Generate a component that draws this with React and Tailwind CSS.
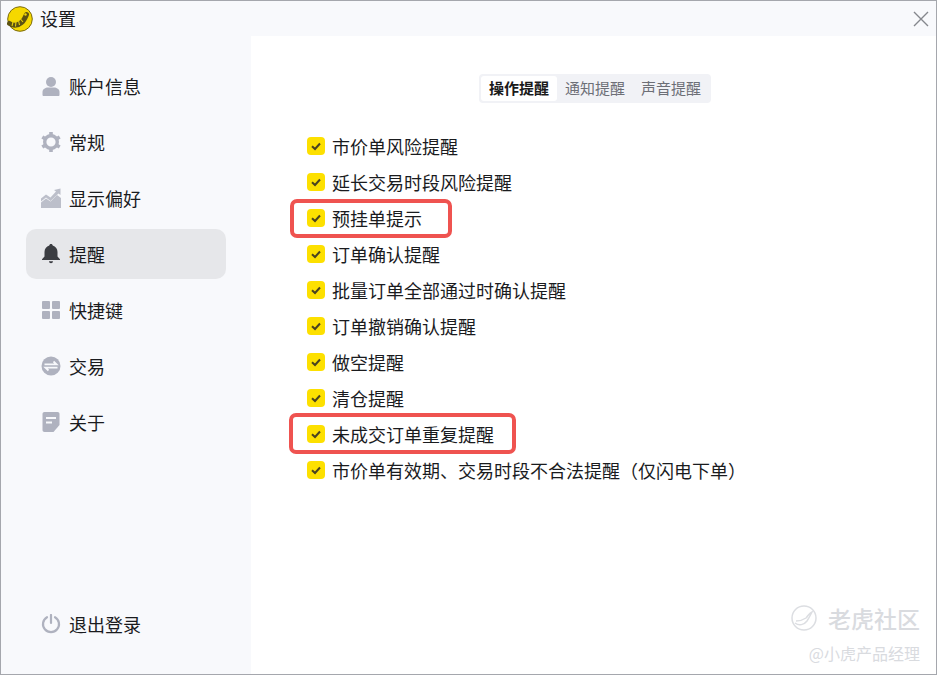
const menu = [
  { label: "账户信息", icon: UserIcon },
  { label: "常规", icon: GearIcon },
  { label: "显示偏好", icon: ChartIcon },
  { label: "提醒", icon: BellIcon, active: true },
  { label: "快捷键", icon: GridIcon },
  { label: "交易", icon: SwapIcon },
  { label: "关于", icon: NoteIcon },
];

const rows = [
  { label: "市价单风险提醒" },
  { label: "延长交易时段风险提醒" },
  { label: "预挂单提示", mark: "left-[-17px] top-[-1px] w-[162px] h-[39px]" },
  { label: "订单确认提醒" },
  { label: "批量订单全部通过时确认提醒" },
  { label: "订单撤销确认提醒" },
  { label: "做空提醒" },
  { label: "清仓提醒" },
  { label: "未成交订单重复提醒", mark: "left-[-18px] top-[-3px] w-[227px] h-[41px]" },
  { label: "市价单有效期、交易时段不合法提醒（仅闪电下单）" },
];

function UserIcon() {
  return (
    <svg viewBox="0 0 20 20" className="w-5 h-5" fill="#afb2bf">
      <circle cx="10" cy="6" r="5" />
      <path d="M1.500 19v-3c0-3 3-4.500 5.500-4.500h6c2.500 0 5.500 1.500 5.500 4.500v3c0 .5-.5 1-1 1h-15c-.5 0-1-.5-1-1z" />
    </svg>
  );
}

function GearIcon() {
  return (
    <svg viewBox="0 0 20 20" className="w-5 h-5">
      <circle cx="10" cy="10" r="6.300" fill="none" stroke="#afb2bf" strokeWidth="3.400" />
      <g stroke="#afb2bf" strokeWidth="3.600">
        <path d="M10 0v3.500M10 16.500V20M1.300 5l3 1.800M15.700 13.200l3 1.800M1.300 15l3-1.800M15.700 6.800l3-1.800" />
      </g>
    </svg>
  );
}

function ChartIcon() {
  return (
    <svg viewBox="0 0 20 20" className="w-5 h-5" fill="#bcbfca">
      <path d="M0 20v-5.500l5-4 4.500 3L16 7l4 3v10z" />
      <path d="M0 10.500l5-4 4.500 3L15 3.500l-2-1.500 6.500-1.500V7l-2-1.500-8 7.500L5 9.500l-5 4z" />
    </svg>
  );
}

function BellIcon() {
  return (
    <svg viewBox="0 0 20 20" className="w-5 h-5" fill="#3b3d42">
      <path d="M10 0c1 0 1.700.7 1.700 1.600C14.700 2.400 16.500 5 16.500 8v4.500l2.500 2.700V16H1v-.8l2.500-2.700V8c0-3 1.800-5.600 4.800-6.400C8.300.7 9 0 10 0z" />
      <path d="M8 17.300h4c0 1.200-.9 2-2 2s-2-.8-2-2z" />
    </svg>
  );
}

function GridIcon() {
  return (
    <svg viewBox="0 0 20 20" className="w-5 h-5" fill="#afb2bf">
      <rect x="1" y="1" width="8" height="8" rx="1" />
      <rect x="11" y="1" width="8" height="8" rx="1" />
      <rect x="1" y="11" width="8" height="8" rx="1" />
      <rect x="11" y="11" width="8" height="8" rx="1" />
    </svg>
  );
}

function SwapIcon() {
  return (
    <svg viewBox="0 0 20 20" className="w-5 h-5">
      <circle cx="10" cy="10" r="9.500" fill="#afb2bf" />
      <path d="M3.500 8.300h12L12.500 5.500M16.500 11.700h-12l3 2.800" fill="none" stroke="#f8f9fc" strokeWidth="1.800" />
    </svg>
  );
}

function NoteIcon() {
  return (
    <svg viewBox="0 0 20 20" className="w-5 h-5">
      <path d="M3.500 0h13c1.200 0 2 .8 2 2v11l-6 7h-9c-1.200 0-2-.8-2-2V2c0-1.200.8-2 2-2z" fill="#afb2bf" />
      <path d="M5 6h10M5 10.500h6" stroke="#f8f9fc" strokeWidth="2" />
    </svg>
  );
}

function PowerIcon() {
  return (
    <svg viewBox="0 0 20 20" className="w-5 h-5" fill="none" stroke="#afb2bf" strokeWidth="2.200" strokeLinecap="round">
      <path d="M6 3.200a8 8 0 1 0 8 0" />
      <path d="M10 1v8" />
    </svg>
  );
}

function Logo() {
  return (
    <svg viewBox="0 0 26 26" className="w-[26px] h-[26px]">
      <circle cx="13" cy="13" r="12.300" fill="#f5d800" stroke="#7a6a10" strokeWidth="1" />
      <path d="M2.500 17.500c4 2.500 8.500 2 12-1 2.500-2 3.500-4.500 5-8" fill="none" stroke="#5c5212" strokeWidth="5" strokeLinecap="round" />
      <path d="M5 20l1-4M8.500 20.500l.5-5M12.500 19l-1-4.500M16 16l-2.500-3" stroke="#e8cf10" strokeWidth="1.100" />
      <circle cx="18.500" cy="8.500" r="1.200" fill="#f5d800" />
    </svg>
  );
}

function Check() {
  return (
    <span className="flex items-center justify-center w-[18px] h-[18px] rounded-[4px] bg-[#fde000] shrink-0">
      <svg viewBox="0 0 18 18" className="w-[18px] h-[18px]" fill="none" stroke="#4a4320" strokeWidth="2">
        <path d="M5 9.200l3 2.800 5-5.500" />
      </svg>
    </span>
  );
}

function TigerMark() {
  return (
    <svg viewBox="0 0 28 28" className="w-7 h-7" fill="none" stroke="#dcdee2" strokeWidth="1.500">
      <circle cx="14" cy="14" r="12" />
      <path d="M5 19c4 3 9 2 12-2 2-3 3-5 5-9-3 1-4 4-6 6-3 2-6 3-10 3" />
    </svg>
  );
}

export default function App() {
  return (
    <div
      className="relative flex flex-col w-[937px] h-[675px] overflow-hidden bg-[#f8f9fc] border border-[#a5a7ad] text-[#1a1b1e]"
      style={{ fontFamily: '"Noto Sans CJK SC", "Noto Sans", sans-serif' }}
    >
      <header className="flex items-center h-[35px] shrink-0 pl-[6px] pr-[7px]">
        <Logo />
        <span className="ml-[7px] text-[18px] leading-none -mt-[2px]">设置</span>
        <svg viewBox="0 0 16 16" className="w-4 h-4 ml-auto" fill="none" stroke="#85878d" strokeWidth="1.400">
          <path d="M1 1l14 14M15 1L1 15" />
        </svg>
      </header>

      <div className="flex flex-1 min-h-0">
        <aside className="flex flex-col w-[250px] shrink-0 pl-[25px] pr-[25px] pt-[25px] pb-[25px]">
          <nav className="flex flex-col gap-[6px]">
            {menu.map(({ label, icon: Icon, active }) => (
              <div
                key={label}
                className={`flex items-center gap-[8px] h-[50px] pl-[15px] rounded-[10px] text-[18px] ${active ? "bg-[#e6e7ea]" : ""}`}
              >
                <Icon />
                <span>{label}</span>
              </div>
            ))}
          </nav>
          <div className="mt-auto flex items-center gap-[8px] h-[50px] pl-[15px] text-[18px]">
            <PowerIcon />
            <span>退出登录</span>
          </div>
        </aside>

        <main className="relative flex-1 bg-white pt-[38px]">
          <div className="flex justify-center pl-[3px]">
            <div className="flex items-center h-[29px] p-[2px] rounded-[4px] bg-[#f1f2f6] text-[15px]">
              <span className="flex items-center h-full px-[8px] bg-white rounded-[3px] font-bold text-[#1a1a1a]">操作提醒</span>
              <span className="px-[8px] text-[#6d6f76]">通知提醒</span>
              <span className="px-[8px] text-[#6d6f76]">声音提醒</span>
            </div>
          </div>

          <ul className="flex flex-col mt-[25px] pl-[56px]">
            {rows.map((row) => (
              <li key={row.label} className="relative flex items-center gap-[7px] h-[36px] text-[18px]">
                <Check />
                <span>{row.label}</span>
                {row.mark && (
                  <span className={`absolute rounded-[7px] border-[4px] border-[#ef5350] ${row.mark}`} />
                )}
              </li>
            ))}
          </ul>

          <div className="absolute right-[16px] bottom-[13px] flex flex-col items-end gap-[13px] text-[#d9dbdf]">
            <div className="flex items-center gap-[10px]">
              <TigerMark />
              <span className="text-[23px] leading-none font-medium">老虎社区</span>
            </div>
            <span className="text-[16px] leading-none">@小虎产品经理</span>
          </div>
        </main>
      </div>
    </div>
  );
}
